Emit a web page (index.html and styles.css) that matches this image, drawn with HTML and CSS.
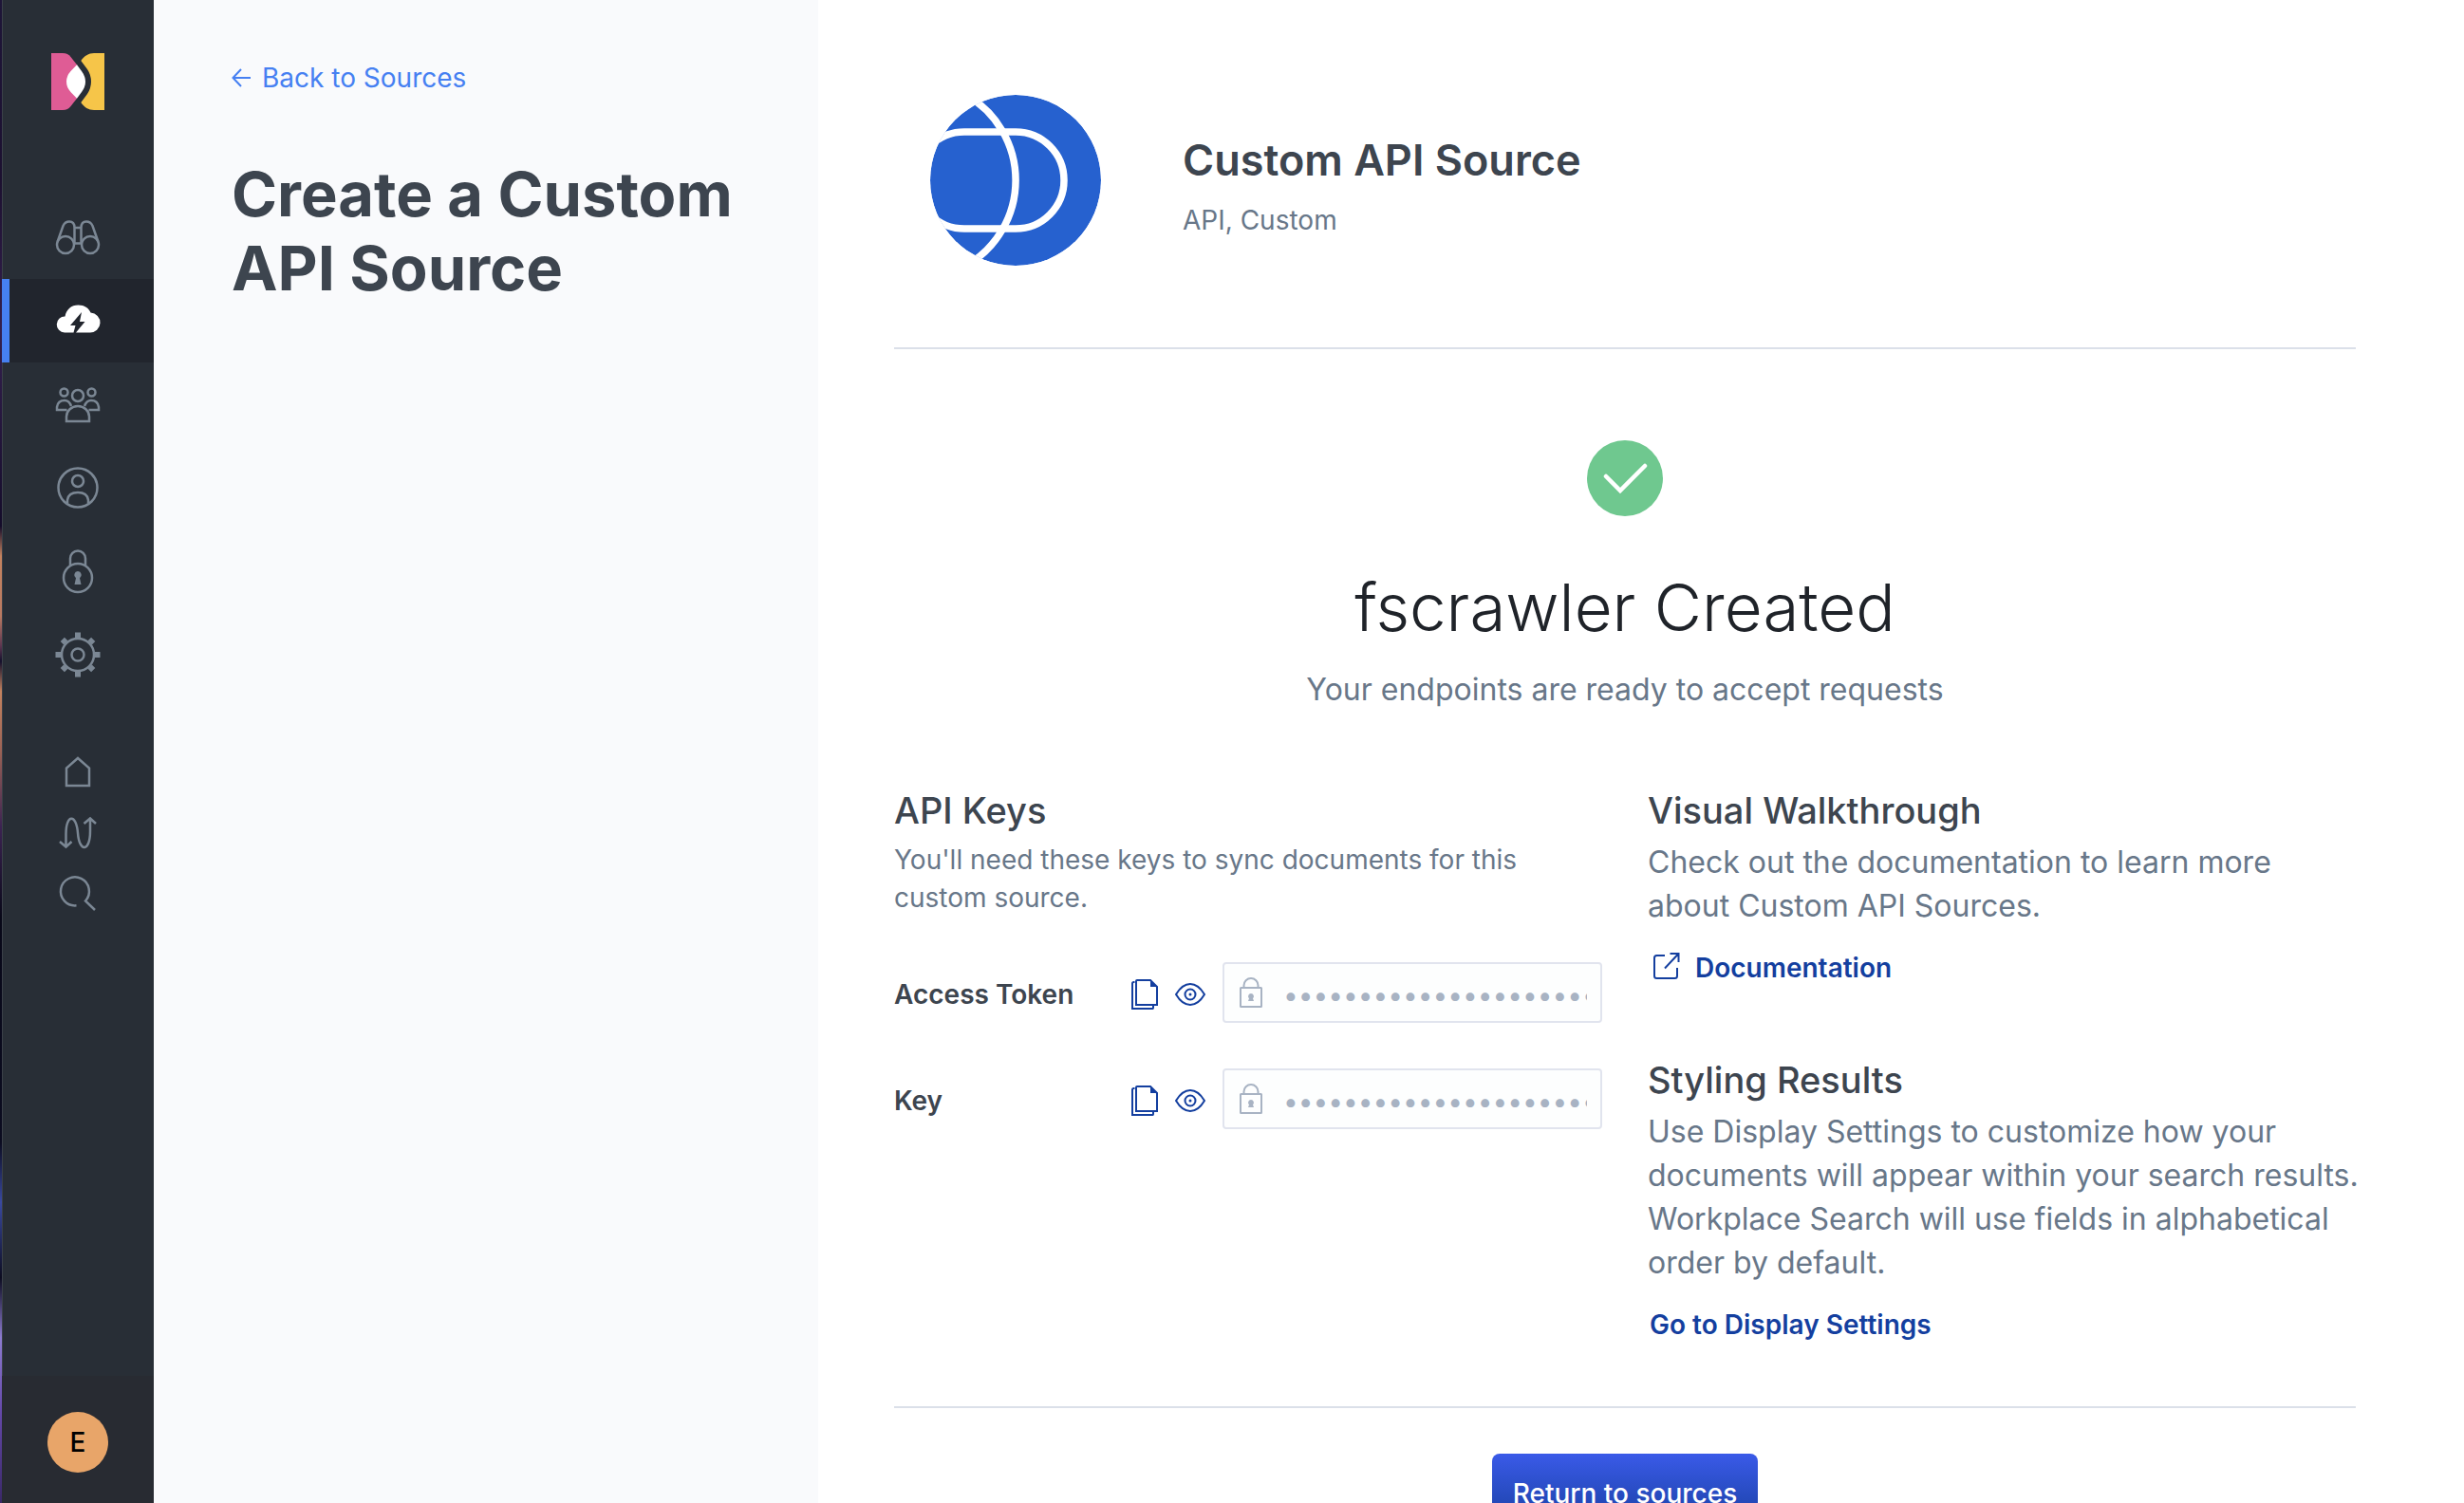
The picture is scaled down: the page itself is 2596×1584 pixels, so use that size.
FILE: index.html
```html
<!DOCTYPE html>
<html lang="en">
<head>
<meta charset="utf-8">
<title>Create a Custom API Source</title>
<link rel="stylesheet" href="styles.css">
</head>
<body>
<svg class="defs" aria-hidden="true">
  <symbol id="copy" viewBox="0 0 28 32"><path d="M3.500 3H2.500Q1 3 1 4.500V31H22.500Q23 31 23 30V28M6 1H20L27 8V27H5V2Q5 1 6 1Z" fill="none" stroke="currentColor" stroke-width="2"/><path d="M20 1V8H27Z" fill="currentColor"/></symbol>
  <symbol id="eye" viewBox="0 0 32 24"><path d="M1 12Q7.500 1 16 1T31 12Q24.500 23 16 23T1 12Z" fill="none" stroke="currentColor" stroke-width="2"/><circle cx="16" cy="12" r="5.500" fill="none" stroke="currentColor" stroke-width="2"/><circle cx="16" cy="12" r="1.500" fill="currentColor"/></symbol>
  <symbol id="padlock" viewBox="0 0 24 32"><rect x="1" y="11" width="22" height="20" rx="0.500" fill="none" stroke="currentColor" stroke-width="2"/><path d="M4.500 11V8.500a7.500 7.500 0 0 1 15 0V11" fill="none" stroke="currentColor" stroke-width="2"/><path d="M12 17a3 3 0 0 1 2 5.200l1 2.800H9l1-2.800A3 3 0 0 1 12 17Z" fill="currentColor"/></symbol>
</svg>
<div class="layout">
  <nav class="sidebar" aria-label="Main">
    <a class="logo" href="#" aria-label="Workplace Search">
      <svg width="56" height="60" viewBox="0 0 56 60"><path d="M0 0H12C16 0 18.500 1.500 20.500 4L27 12.300V47.700L20.500 56C18.500 58.500 16 60 12 60H0Z" fill="#df5c95"/><path d="M27 12.300L32 19Q36 24.500 36 30T32 41L27 47.700L20.500 41Q16 36 16 30T20.500 19Z" fill="#fff"/><path d="M56 0H45C39.500 0 34.500 3 31.300 8L38 17Q42 23 42 30T38 43L31.300 52C34.500 57 39.500 60 45 60H56Z" fill="#f6c549"/></svg>
    </a>
    <ul class="nav">
      <li><a href="#" aria-label="Overview"><svg width="48" height="48" viewBox="0 0 48 48"><circle cx="11" cy="32" r="9"/><circle cx="37" cy="32" r="9"/><path d="M2.500 29L8.500 12Q10.500 7.500 15 7.500Q20.500 7.500 20.500 14V31M45.500 29L39.500 12Q37.500 7.500 33 7.500Q27.500 7.500 27.500 14V31M20.500 14H27.500M20.500 30.500H27.500"/></svg></a></li>
      <li class="active"><a href="#" aria-label="Sources"><svg width="48" height="48" viewBox="0 2 48 48"><path class="solid" d="M10 38.500A8.500 8.500 0 0 1 10.500 21.500C12 14 17 9.500 24.500 9.500C31 9.500 35.500 12.500 37.500 17.500A10.500 10.500 0 0 1 36.500 38.500H22L31.500 27H26L28 17L16 31H21.500L19.500 38.500Z"/></svg></a></li>
      <li><a href="#" aria-label="Groups"><svg width="48" height="48" viewBox="0 -3 48 48"><circle cx="24" cy="12" r="6"/><circle cx="9.500" cy="8.500" r="4"/><circle cx="38.500" cy="8.500" r="4"/><path d="M12 39V34A11.500 10.500 0 0 1 36 34V39ZM12.500 27H2V24Q3 17 10 17Q15 17 17 23M35.500 27H46V24Q45 17 38 17Q33 17 31 23"/></svg></a></li>
      <li><a href="#" aria-label="Users"><svg width="48" height="48" viewBox="0 0 48 48"><circle cx="24" cy="24" r="20.500"/><circle cx="24" cy="17" r="6"/><path d="M13 40.500V37Q14 29 24 29T35 37V40.500"/></svg></a></li>
      <li><a href="#" aria-label="Security"><svg width="48" height="48" viewBox="0 0 48 48"><circle cx="24" cy="31" r="15"/><path d="M16 18V10.500a8 8 0 0 1 16 0V18"/><path class="solid" d="M24 24a4 4 0 0 1 2 7.300L27.500 38h-7L22 31.300A4 4 0 0 1 24 24Z"/></svg></a></li>
      <li><a href="#" aria-label="Settings"><svg width="48" height="48" viewBox="0 0 48 48"><circle cx="24" cy="24" r="17"/><circle cx="24" cy="24" r="6.500"/><path class="teeth" d="M24 6V.500M24 42V47.500M6 24H.500M42 24H47.500M11.300 11.300L7.800 7.800M36.700 36.700L40.200 40.200M11.300 36.700L7.800 40.200M36.700 11.300L40.200 7.800"/></svg></a></li>
    </ul>
    <ul class="nav nav-small">
      <li><a href="#" aria-label="Home"><svg width="40" height="40" viewBox="0 0 40 40"><path d="M8 34V15.500L20 5L32 15.500V34Z"/></svg></a></li>
      <li><a href="#" aria-label="Sync"><svg width="40" height="40" viewBox="0 0 40 40"><path d="M1 29L7.500 34.500L13.500 29M7.500 34V21C7.500 -.500 18.500 -.500 20 20S33 40 33 18V6M26.500 10L33 4.500L39 10"/></svg></a></li>
      <li><a href="#" aria-label="Search"><svg width="40" height="40" viewBox="0 0 40 40"><path d="M18.500 32.300A15 15 0 1 1 28 27.500L38 37"/></svg></a></li>
    </ul>
    <div class="account"><button class="avatar" type="button">E</button></div>
  </nav>

  <aside class="panel">
    <a class="back" href="#"><svg width="20" height="20" viewBox="0 0 20 20"><path d="M20 10H2M10 1L1.500 10L10 19" fill="none" stroke="currentColor" stroke-width="2"/></svg>Back to Sources</a>
    <h1>Create a Custom API Source</h1>
  </aside>

  <main class="content">
    <header class="source">
      <svg width="180" height="180" viewBox="0 0 180 180" aria-hidden="true"><clipPath id="disc"><circle cx="90" cy="90" r="90"/></clipPath><g clip-path="url(#disc)"><circle cx="90" cy="90" r="90" fill="#2661cf"/><g fill="none" stroke="#fff" stroke-width="7.500"><rect x="-15" y="39" width="156" height="102" rx="51"/><path d="M36 -1A103.600 103.600 0 0 1 36 181"/></g></g></svg>
      <div>
        <h2>Custom API Source</h2>
        <p>API, Custom</p>
      </div>
    </header>

    <section class="created">
      <svg width="80" height="80" viewBox="0 0 80 80" aria-hidden="true"><circle cx="40" cy="40" r="40" fill="#6fc88f"/><path d="M20 38L35 53L61 27" fill="none" stroke="#fff" stroke-width="4.500" stroke-linecap="round"/></svg>
      <h2>fscrawler Created</h2>
      <p>Your endpoints are ready to accept requests</p>
    </section>

    <div class="columns">
      <section class="keys">
        <h3>API Keys</h3>
        <p>You'll need these keys to sync documents for this custom source.</p>
        <div class="field">
          <label for="token">Access Token</label>
          <button type="button" aria-label="Copy access token"><svg width="28" height="32"><use href="#copy"/></svg></button>
          <button type="button" aria-label="Show access token"><svg width="32" height="24"><use href="#eye"/></svg></button>
          <div class="box"><svg width="24" height="32"><use href="#padlock"/></svg><input id="token" type="password" value="0123456789012345678901234567890123456789" readonly></div>
        </div>
        <div class="field">
          <label for="key">Key</label>
          <button type="button" aria-label="Copy key"><svg width="28" height="32"><use href="#copy"/></svg></button>
          <button type="button" aria-label="Show key"><svg width="32" height="24"><use href="#eye"/></svg></button>
          <div class="box"><svg width="24" height="32"><use href="#padlock"/></svg><input id="key" type="password" value="0123456789012345678901234567890123456789" readonly></div>
        </div>
      </section>
      <div class="guides">
        <section>
          <h3>Visual Walkthrough</h3>
          <p>Check out the documentation to learn more<br>about Custom API Sources.</p>
          <a class="action" href="#"><svg width="28" height="28" viewBox="0 0 28 28"><path d="M12 3H3.500Q1 3 1 5.500V24.500Q1 27 3.500 27H22.500Q25 27 25 24.500V16M17.500 1H26.500V10M26.500 1L12 16.500" fill="none" stroke="currentColor" stroke-width="2"/></svg>Documentation</a>
        </section>
        <section>
          <h3>Styling Results</h3>
          <p>Use Display Settings to customize how your documents will appear within your search results. Workplace Search will use fields in alphabetical order by default.</p>
          <a class="action" href="#">Go to Display Settings</a>
        </section>
      </div>
    </div>

    <footer class="footer"><button class="primary" type="button">Return to sources</button></footer>
  </main>
</div>
</body>
</html>
```
FILE: styles.css
```css
* { box-sizing: border-box; }

body {
  margin: 0;
  background: #fff;
  color: #3d454f;
  font-family: Inter, "Liberation Sans", sans-serif;
  font-size: 28px;
  line-height: 40px;
}

h1, h2, h3, p, ul { margin: 0; padding: 0; }
ul { list-style: none; }
a { color: #143f9f; text-decoration: none; }
svg { display: block; flex: none; }
button { font: inherit; border: 0; padding: 0; background: none; cursor: pointer; }
.defs { position: absolute; width: 0; height: 0; }

.layout {
  display: flex;
  height: 100vh;
  overflow: hidden;
  padding-left: 2px;
  background: linear-gradient(#1e1538, #1c1030 12%, #34204e 22%, #140c2a 35%, #c5835f 37%, #b97a62 41%, #5c3550 43%, #14102c 44%, #c5835f 46%, #9a6255 50%, #3c2352 55%, #080818 61%, #0b0c20 76%, #3a49a0 80%, #0c0c20 85%, #8d7bd0 89%, #6448a8 94%, #3a2868) left / 2px 100% no-repeat;
}

.sidebar {
  display: flex;
  flex-direction: column;
  flex: none;
  width: 160px;
  background: #282e36;
  box-shadow: inset 1px 0 #3a4148;
}
.logo { display: flex; justify-content: center; padding: 56px 0 90px; }
.nav a {
  display: flex;
  align-items: center;
  justify-content: center;
  height: 88px;
  color: #7b8794;
}
.nav svg {
  fill: none;
  stroke: currentColor;
  stroke-width: 2.500;
  overflow: visible;
}
.nav .solid { fill: currentColor; stroke: none; }
.nav .teeth { stroke-width: 6; }
.nav .active a {
  color: #fff;
  background: #21252d;
  border-left: 8px solid #4680f2;
  padding-right: 8px;
}
.nav-small { padding-top: 48px; }
.nav-small a { height: 64px; }
.account {
  display: flex;
  justify-content: center;
  margin-top: auto;
  padding: 38px 0 32px;
  background: #282b32;
}
.avatar {
  width: 64px;
  height: 64px;
  border-radius: 50%;
  background: #e8a569;
  color: #000;
  font-weight: 500;
}

.panel {
  flex: none;
  width: 700px;
  padding: 62px 80px 62px 82px;
  background: #f9fafc;
}
.back { display: flex; align-items: center; gap: 12px; color: #4680f2; }
.panel h1 { margin-top: 64px; font-size: 65px; font-weight: 700; line-height: 78px; }

.content { flex: 1; min-width: 0; padding: 0 114px 0 80px; }
.source {
  display: flex;
  gap: 86px;
  padding: 100px 38px 86px;
  border-bottom: 2px solid #dbe0e9;
}
.source h2 { margin-top: 40px; font-size: 45px; font-weight: 600; line-height: 58px; }
.source p { margin-top: 14px; color: #687789; }

.created {
  display: flex;
  flex-direction: column;
  align-items: center;
  padding: 96px 0;
  text-align: center;
}
.created h2 { margin-top: 52px; color: #1f2329; font-size: 69px; font-weight: 300; line-height: 88px; }
.created p { margin-top: 20px; color: #687789; font-size: 32px; line-height: 46px; }

.columns {
  display: grid;
  grid-template-columns: repeat(2, minmax(0, 1fr));
  gap: 48px;
  margin-top: -16px;
}
.columns h3 { font-size: 38px; font-weight: 500; line-height: 48px; }
.columns p { color: #687789; }
.keys p { margin-top: 8px; }
.field { display: flex; align-items: center; height: 68px; margin-top: 44px; }
.keys p + .field { margin-top: 48px; }
.field label { width: 250px; font-weight: 600; }
.field button { color: #143f9f; margin-right: 18px; }
.box {
  display: flex;
  flex: 1;
  align-items: center;
  align-self: flex-start;
  gap: 22px;
  min-width: 0;
  height: 64px;
  padding: 0 14px 0 16px;
  border: 2px solid #e1e4ee;
  border-radius: 4px;
  background: #fdfefe;
  color: #a8b3c3;
}
.box input {
  flex: 1;
  min-width: 0;
  border: 0;
  padding: 6px 0 0;
  outline: 0;
  background: none;
  color: inherit;
  font: inherit;
}

.guides { display: grid; gap: 74px; }
.guides p { margin: 8px -16px 0 0; font-size: 32px; line-height: 46px; }
.action { display: flex; align-items: center; gap: 16px; margin-top: 22px; padding-left: 2px; font-weight: 600; }
.action svg { margin: 0 0 4px 4px; }

.footer {
  display: flex;
  justify-content: center;
  margin-top: 66px;
  padding: 48px 0;
  border-top: 2px solid #dbe0e9;
}
.primary {
  flex: none;
  width: 280px;
  height: 84px;
  border-radius: 8px;
  background: linear-gradient(#3a5ae8, #163e9c);
  color: #fff;
  font-weight: 500;
}
```
